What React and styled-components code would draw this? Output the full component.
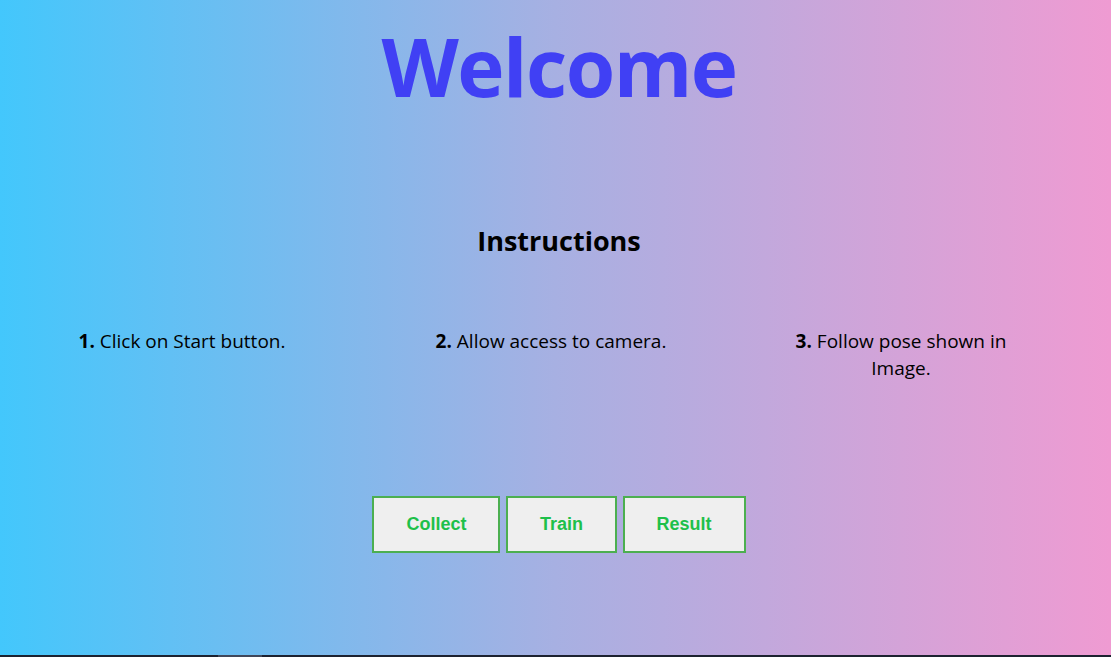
import styled, { createGlobalStyle } from "styled-components";

const GlobalStyle = createGlobalStyle`
  html, body {
    margin: 0;
    padding: 0;
    overflow: hidden;
  }
  body {
    font-family: "Open Sans", "Noto Sans", sans-serif;
    color: #000;
  }
`;

const Page = styled.div`
  display: flex;
  flex-direction: column;
  height: 100vh;
`;

const Main = styled.main`
  flex: 1;
  display: flex;
  flex-direction: column;
  align-items: center;
  padding-left: 7px;
  background: linear-gradient(to right, #43c7fc 0%, #a7b0e2 50%, #ef9bd2 100%);
`;

const Title = styled.h1`
  margin: 18px 0 0;
  font-size: 80px;
  font-weight: 700;
  line-height: 1.2;
  color: #4040f4;
  letter-spacing: -1.5px;
`;

const Heading = styled.h2`
  margin: 109px 0 0;
  font-size: 27px;
  font-weight: 700;
  line-height: 1.3;
`;

const Steps = styled.ol`
  list-style: none;
  margin: 70px 0 0 41px;
  padding: 0;
  align-self: flex-start;
  display: grid;
  grid-template-columns: 268px 250px 230px;
  column-gap: 110px;
`;

const Step = styled.li`
  text-align: center;
  font-size: 19px;
  line-height: 27px;
`;

const Num = styled.b`
  font-weight: 700;
`;

const Actions = styled.div`
  display: flex;
  gap: 6px;
  margin-top: 114px;
`;

const Button = styled.button`
  font-family: "Liberation Sans", Arial, sans-serif;
  font-size: 18px;
  font-weight: 700;
  color: #1ec04a;
  background: #efefef;
  border: 2px solid #4caf50;
  padding: 16px ${(p) => p.$px || 30}px;
  line-height: 21px;
  cursor: pointer;
`;

const ScrollTrack = styled.div`
  height: 2px;
  background: #1d2230;
  display: flex;
  padding-left: 218px;
`;

const ScrollThumb = styled.div`
  width: 44px;
  background: #40475a;
`;

const steps = [
  { n: "1.", text: "Click on Start button." },
  { n: "2.", text: "Allow access to camera." },
  { n: "3.", text: "Follow pose shown in Image." },
];

export default function App() {
  return (
    <Page>
      <GlobalStyle />
      <Main>
        <Title>Welcome</Title>
        <Heading>Instructions</Heading>
        <Steps>
          {steps.map((s) => (
            <Step key={s.n}>
              <Num>{s.n}</Num> {s.text}
            </Step>
          ))}
        </Steps>
        <Actions>
          <Button $px={32}>Collect</Button>
          <Button $px={31.5}>Train</Button>
          <Button $px={32}>Result</Button>
        </Actions>
      </Main>
      <ScrollTrack>
        <ScrollThumb />
      </ScrollTrack>
    </Page>
  );
}
